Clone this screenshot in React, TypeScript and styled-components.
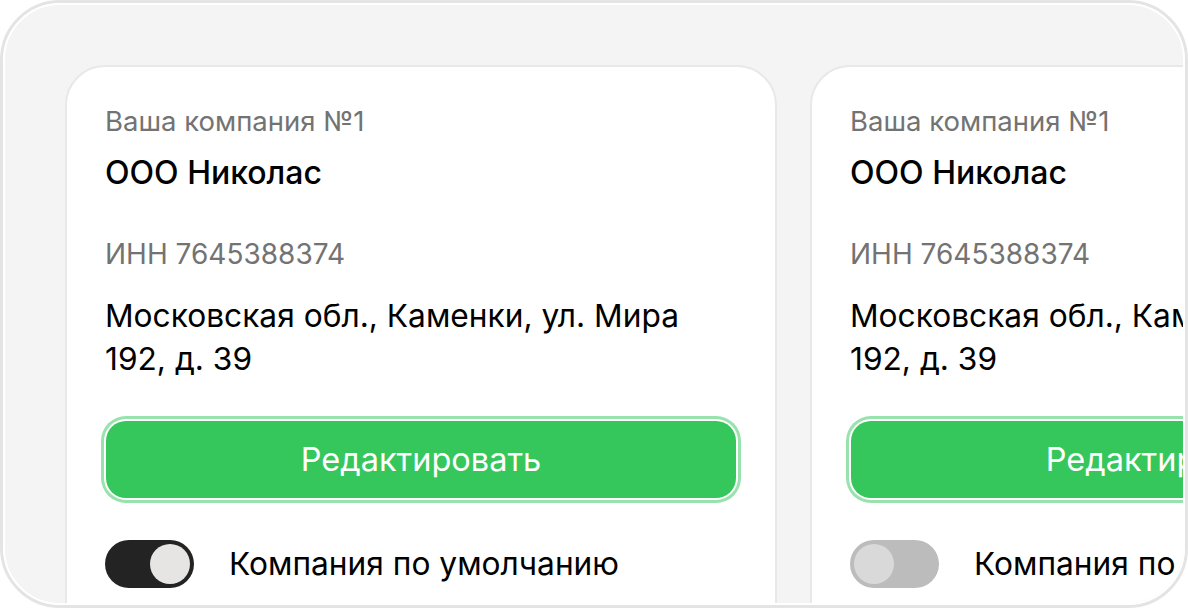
import React from "react";
import styled, { createGlobalStyle } from "styled-components";

const Global = createGlobalStyle`
  html, body { margin: 0; padding: 0; background: #ffffff; }
  body { font-family: Inter, "Noto Sans", sans-serif; -webkit-font-smoothing: antialiased; }
  * { box-sizing: border-box; }
`;

const Frame = styled.div`
  width: 1188px;
  height: 608px;
  border: 3px solid #e4e4e4;
  border-radius: 60px;
  overflow: hidden;
`;

const Screen = styled.div`
  width: 100%;
  height: 100%;
  border: 2px solid #ffffff;
  border-radius: 57px;
  background: #f4f4f4;
  overflow: hidden;
  padding: 60px 0 0 60px;
  display: flex;
  gap: 33px;
`;

const Card = styled.div`
  flex: 0 0 712px;
  height: 700px;
  background: #ffffff;
  border: 2px solid #e8e8e8;
  border-radius: 40px;
  padding: 38px 38px;
  display: flex;
  flex-direction: column;
`;

const Caption = styled.div`
  font-size: 27.5px;
  line-height: 32px;
  color: #737373;
  white-space: nowrap;
`;

const Name = styled.div`
  margin-top: 18px;
  font-size: 32px;
  line-height: 36px;
  font-weight: 500;
  color: #000;
  white-space: nowrap;
`;

const Inn = styled(Caption)`
  margin-top: 47px;
  font-size: 28px;
`;

const Address = styled.div`
  margin-top: 24px;
  font-size: 31.7px;
  line-height: 43px;
  color: #000;
  width: 632px;
`;

const EditButton = styled.button`
  margin-top: 41px;
  margin-left: 1px;
  width: 630px;
  height: 77px;
  flex: 0 0 auto;
  border: none;
  border-radius: 20px;
  background: #36c75c;
  color: #ffffff;
  font-family: inherit;
  font-size: 32.5px;
  box-shadow: 0 0 0 2px #ffffff, 0 0 0 5px #98e2ad;
  white-space: nowrap;
`;

const ToggleRow = styled.div`
  margin-top: 42px;
  display: flex;
  align-items: center;
  gap: 35px;
`;

const Track = styled.div<{ $on: boolean }>`
  width: 89px;
  height: 48px;
  flex: 0 0 auto;
  border-radius: 24px;
  background: ${(p) => (p.$on ? "#232323" : "#bcbcbc")};
  display: flex;
  align-items: center;
  justify-content: ${(p) => (p.$on ? "flex-end" : "flex-start")};
  padding: 0 4px;
`;

const Knob = styled.div<{ $on: boolean }>`
  width: 40px;
  height: 40px;
  border-radius: 50%;
  background: ${(p) => (p.$on ? "#e6e5e4" : "#d9d9d9")};
`;

const ToggleLabel = styled.span`
  font-size: 31.7px;
  line-height: 38px;
  color: #000;
  white-space: nowrap;
`;

const companies = [{ on: true }, { on: false }];

export default function App() {
  return (
    <>
      <Global />
      <Frame>
        <Screen>
          {companies.map((c, i) => (
            <Card key={i}>
              <Caption>Ваша компания №1</Caption>
              <Name>ООО Николас</Name>
              <Inn>ИНН 7645388374</Inn>
              <Address>Московская обл., Каменки, ул. Мира 192, д. 39</Address>
              <EditButton>Редактировать</EditButton>
              <ToggleRow>
                <Track $on={c.on}>
                  <Knob $on={c.on} />
                </Track>
                <ToggleLabel>Компания по умолчанию</ToggleLabel>
              </ToggleRow>
            </Card>
          ))}
        </Screen>
      </Frame>
    </>
  );
}
